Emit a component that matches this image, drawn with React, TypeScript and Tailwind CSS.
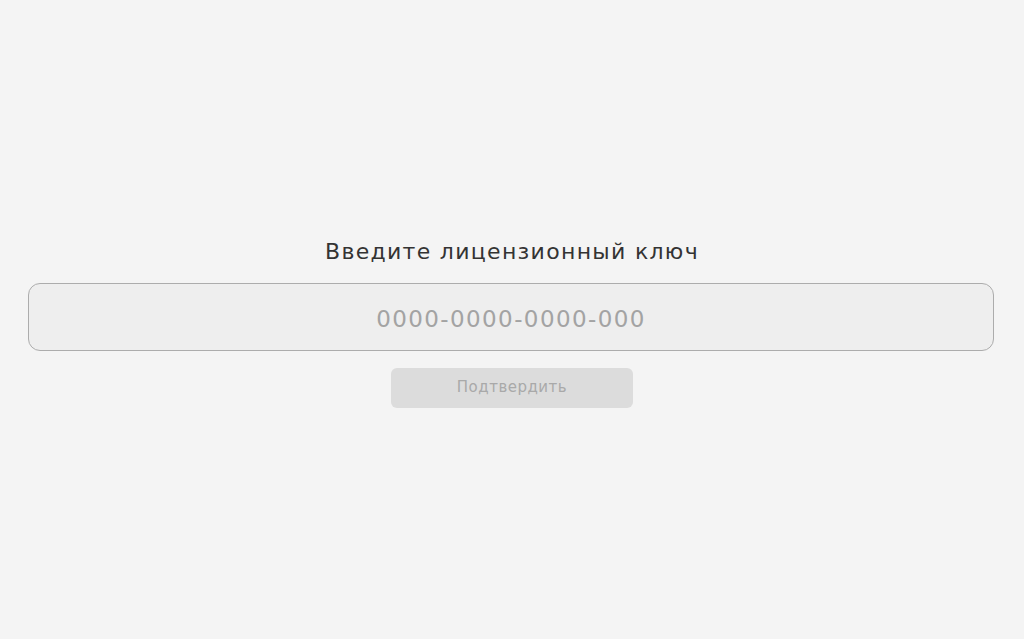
export default function App() {
  return (
    <div
      className="flex min-h-[639px] w-full flex-col items-center justify-center bg-[#f4f4f4] pt-[6px]"
      style={{ fontFamily: '"DejaVu Sans", "Noto Sans", sans-serif' }}
    >
      <h1 className="text-[22px] leading-[28px] font-normal text-[#333333] tracking-[1.3px]">
        Введите лицензионный ключ
      </h1>
      <div className="mt-[17px] w-[966px] self-start ml-[28px]">
        <input
          type="text"
          placeholder="0000-0000-0000-000"
          className="h-[68px] w-full rounded-[12px] border-[1.5px] border-[#acacac] bg-[#eeeeee] pt-[4px] text-center text-[23px] tracking-[1.4px] text-[#333] placeholder:text-[#a3a3a3] outline-none"
        />
      </div>
      <button
        disabled
        className="mt-[17px] h-[40px] w-[242px] rounded-[6px] bg-[#dcdcdc] text-[15px] tracking-[0.5px] text-[#a9a9a9]"
      >
        Подтвердить
      </button>
    </div>
  );
}
